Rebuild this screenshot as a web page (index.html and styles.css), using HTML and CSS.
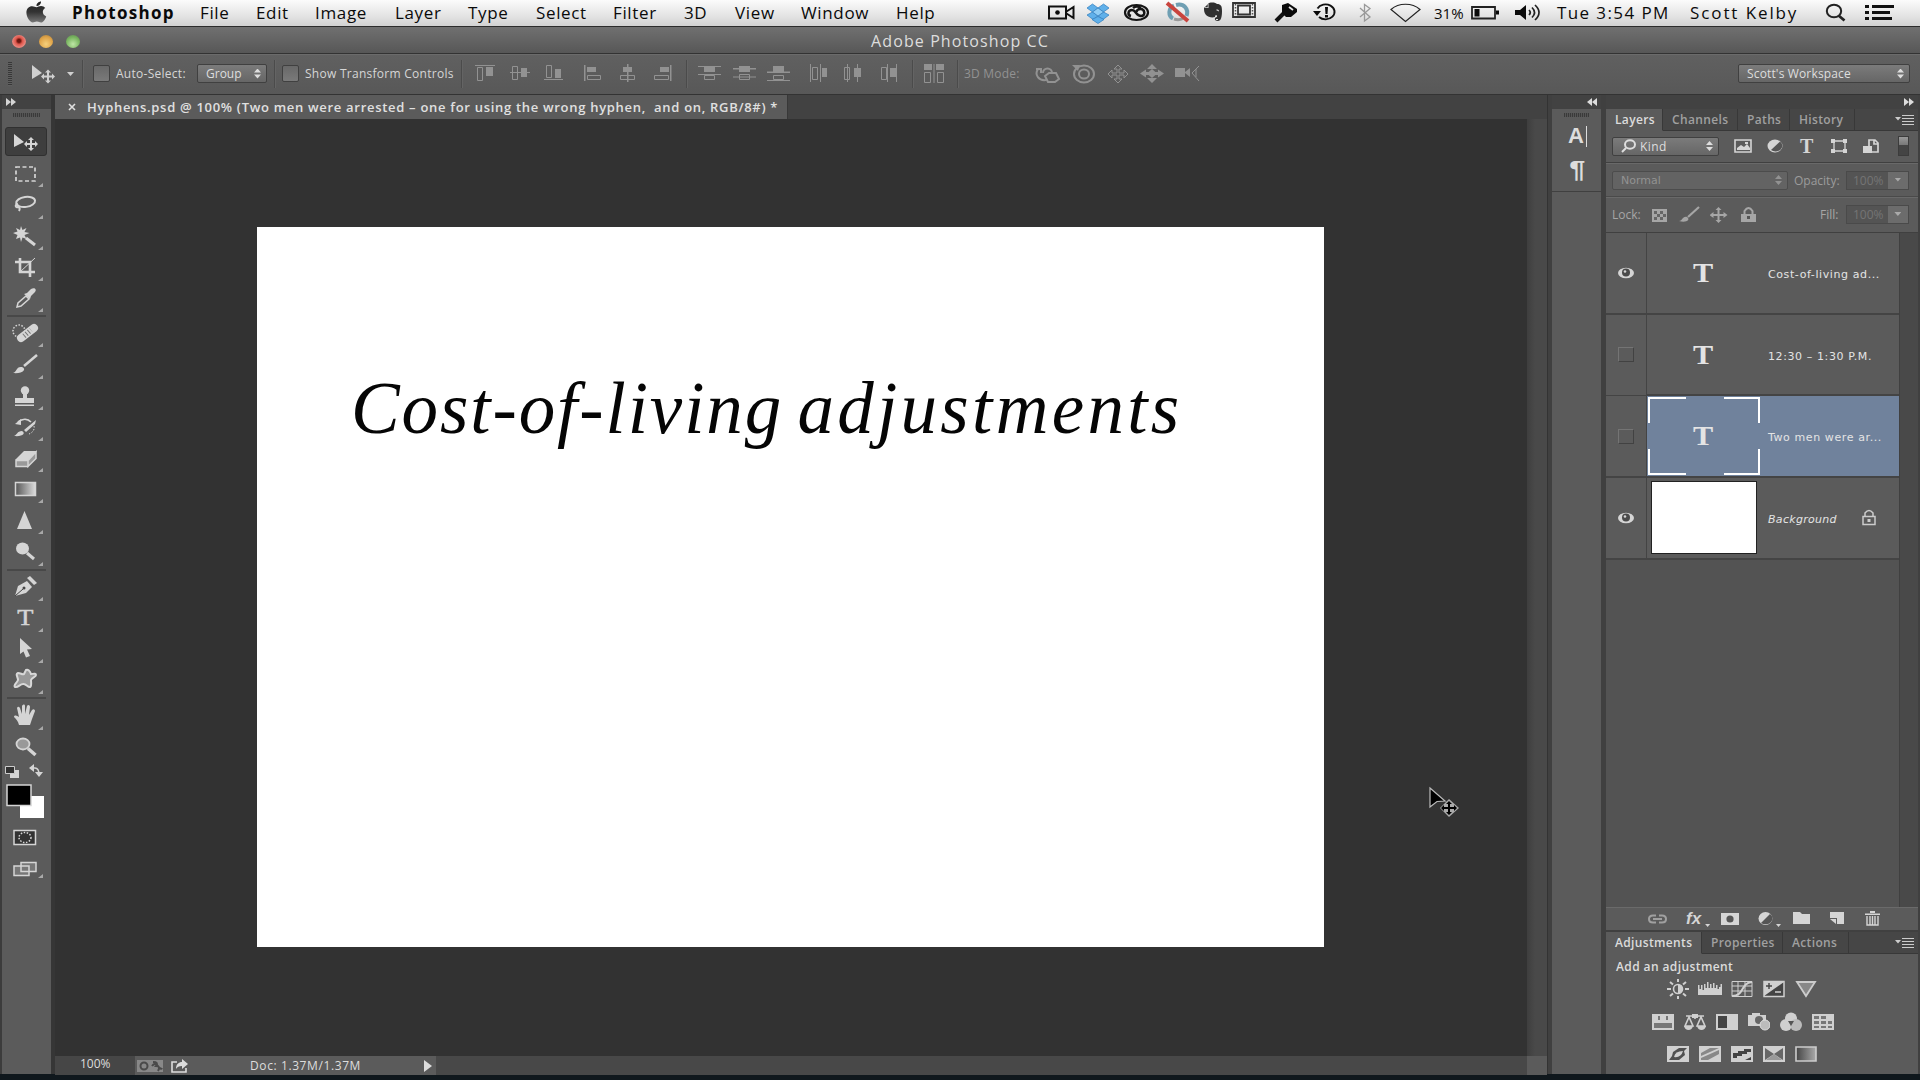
FILE: index.html
```html
<!DOCTYPE html>
<html lang="en">
<head>
  <meta charset="UTF-8" />
  <meta name="viewport" content="width=device-width, initial-scale=1.0" />
  <title>Adobe Photoshop CC</title>
  <link rel="stylesheet" href="styles.css">
</head>
<body>
  <header class="menubar">
    <svg class="apple" width="22" height="26" viewBox="0 0 22 26"><defs><linearGradient id="ap" x1="0" y1="0" x2="0" y2="1"><stop offset="0" stop-color="#222"/><stop offset=".5" stop-color="#333"/><stop offset="1" stop-color="#777"/></linearGradient></defs><path fill="url(#ap)" d="M10.500 7.200c1.200 0 2.600-1.100 4.600-1.100 1.700 0 3.200.7 4.200 2-3.600 2-3.200 6.800.9 8.300-.8 2.400-2.800 6.100-5.200 6.100-1.600 0-2.200-.9-4.100-.9s-2.700.9-4.100.9C4 22.500.4 17.500.4 12.600.4 8.600 3 6.200 6.100 6.200c1.800 0 3.300 1 4.400 1zM10.500 6C10.300 3.600 12.500 1.600 15 1.500 15.200 3.900 13 6 10.500 6z"/></svg>
    <nav class="menus">
      <b class="app">Photoshop</b><span>File</span><span>Edit</span><span>Image</span><span>Layer</span><span>Type</span><span>Select</span><span>Filter</span><span>3D</span><span>View</span><span>Window</span><span>Help</span>
    </nav>
    <div class="status">
      <svg width="28" height="26"><path fill="none" stroke="#111" stroke-width="2" d="M1 6.500h17v12H1zM18.500 11.500l7-4.500v11l-7-4.500"/><circle cx="9.500" cy="12.500" r="2.300"/></svg>
      <svg width="24" height="26"><g fill="#5fb0ea" stroke="#2f7dbd" stroke-width=".7"><path d="M6.500 4l5.500 4-5.500 4L1 8zM17.500 4L23 8l-5.500 4L12 8zM6.500 12l5.500 4-5 3.500L1 15zM17.500 12l5.500 3-6 4.500-5-3.500z"/><path fill="#8fcdf5" d="M12 8l5.500 4-5.500 4-5.500-4z"/><path d="M6 19.500l6-3 6 3-6 4z"/></g></svg>
      <svg width="28" height="26"><ellipse cx="13.500" cy="12.500" rx="11.500" ry="7.500" fill="none" stroke="#151515" stroke-width="2.200"/><path fill="none" stroke="#151515" stroke-width="2.500" d="M8 16c-4-1-3-6 1-6 4 0 4 6 9 6 5 0 4-7-.5-7-3 0-4 2-4 3M10 8c2-2 6-2 8 0"/></svg>
      <svg width="27" height="26"><path fill="none" stroke="#6f9fb3" stroke-width="4" d="M9 5.500C3 8 3 16 8 18.500M11 5c8-2 13 4 10.500 11"/><path fill="none" stroke="#9a9a9a" stroke-width="3" d="M9 19q5 1.500 9-.5"/><path stroke="#c9443e" stroke-width="4" d="M2 3l21 18"/></svg>
      <svg width="20" height="26"><path fill="#303030" d="M1 8l5-5c4-1 7 0 8 1 4 0 5 2 5 7 0 6-1 10-4 10-4 0-4-4-1-4 0-3-2-2-2 0-3 1-7 0-9-2C1 13 1 10 1 8z"/><path fill="#ddd" d="M13 10c2-1 3 0 3 1.500M13 19h2v1h-2zM5.500 4v4H2v-.8h2.700V4z"/></svg>
      <svg width="26" height="26"><path fill="none" stroke="#333" stroke-width="1.800" d="M1 3h22v14H1zM6 5.500h12v9H6z"/><path stroke="#555" stroke-dasharray="1.500 1.500" stroke-width="1.500" d="M3.500 4v12M20.500 4v12"/></svg>
      <svg width="26" height="26"><path stroke="#111" stroke-width="4" d="M2 21L13 10"/><path d="M8 5l6-2 9 6v3l-6 5h-5l-4-4z"/><path stroke="#e5e5e5" stroke-width="1.800" d="M15 7l4 3"/></svg>
      <svg width="26" height="26"><path fill="none" stroke="#111" stroke-width="1.900" d="M4.500 8.500A9 7.500 0 1 1 6 17"/><path d="M0 11h8l-4 5zM12 7h3l-.5 7h-2zM12 15h3v2.500h-3z"/></svg>
      <svg width="14" height="26"><path fill="none" stroke="#999" stroke-width="1.300" d="M1 8l10 9-5.500 4V4.500L11 8.500 1 17"/></svg>
      <svg width="32" height="26"><path fill="none" stroke="#222" stroke-width="1.200" d="M1 9.500C9 2.500 22 2.500 30 9.500L15.500 21.500z"/></svg>
      <span class="pct">31%</span>
      <svg width="30" height="26"><path fill="none" stroke="#222" stroke-width="1.800" d="M1 7h23v11.500H1z"/><path d="M3.500 9h5v7.500h-5zM25 10.500h3v4h-3z"/></svg>
      <svg width="28" height="26"><path d="M0 10h5l6-5v15l-6-5H0z"/><path fill="none" stroke="#222" stroke-width="1.700" d="M14 10q2.500 2.500 0 5M17 7.500q5 5 0 10M20 5q8 7.500 0 15"/></svg>
      <span class="clock">Tue 3:54 PM</span>
      <span class="user">Scott Kelby</span>
      <svg width="24" height="26"><ellipse cx="9" cy="11" rx="7.200" ry="6.200" fill="none" stroke="#222" stroke-width="2"/><path stroke="#222" stroke-width="2.800" d="M13.500 15.500l6 5"/></svg>
      <svg width="31" height="26"><path stroke="#111" stroke-width="2.800" d="M0 6.500h4M7 6.500h22M0 12.500h4M7 12.500h18M0 18.500h4M7 18.500h20"/></svg>
    </div>
  </header>

  <div class="titlebar">
    <div class="lights"><i class="light red"></i><i class="light yellow"></i><i class="light green"></i></div>
    <span class="title">Adobe Photoshop CC</span>
  </div>

  <div class="options">
    <i class="grip"></i>
    <svg class="on" width="27" height="40"><path d="M1 11l10 8-10 6z"/><path d="M17 15.500l3 3h-2v3h3v-2l3 3-3 3v-2h-3v3h2l-3 3-3-3h2v-3h-3v2l-3-3 3-3v2h3v-3h-2z"/></svg>
    <svg class="on" width="10" height="40"><path d="M0 18h7l-3.500 4z"/></svg>
    <i class="sep"></i>
    <i class="check"></i>
    <span class="lbl">Auto-Select:</span>
    <div class="select"><span class="l2">Group</span><i class="updown"></i></div>
    <i class="sep"></i>
    <i class="check"></i>
    <span class="lbl">Show Transform Controls</span>
    <i class="sep"></i>
    <svg width="20" height="40"><path d="M0 11h20v1H0zM11 13h7v9h-7z"/><path class="ln" d="M2.500 13.500h5v13h-5z"/></svg>
    <svg width="20" height="40"><path d="M0 18h20v1H0zM11 14h6v9h-6z"/><path class="ln" d="M2.500 12.500h5v13h-5z"/></svg>
    <svg width="20" height="40"><path d="M0 25h19v1H0zM11 15h6v9h-6z"/><path class="ln" d="M2.500 11.500h5v12h-5z"/></svg>
    <svg width="20" height="40"><path d="M0 11h1.500v16H0zM3 13h9v5H3z"/><path class="ln" d="M3.500 21.500h13v4h-13z"/></svg>
    <svg width="20" height="40"><path d="M8 10h1.500v18H8zM4 13h9v5H4z"/><path class="ln" d="M1.500 21.500h14v4h-14z"/></svg>
    <svg width="20" height="40"><path d="M17 11h1.500v16H17zM7 13h9v5H7z"/><path class="ln" d="M1.500 21.500h14v4h-14z"/></svg>
    <i class="sep"></i>
    <svg width="24" height="40"><path d="M0 12h23v1H0zM6 13h11v5H6zM0 20h23v1H0z"/><path class="ln" d="M6.500 21.500h10v4h-10z"/></svg>
    <svg width="24" height="40"><path d="M0 14h23v1.500H0zM6 12h11v6H6zM0 22.500h23v1H0z"/><path class="ln" d="M6.500 20.500h10v5h-10z"/></svg>
    <svg width="24" height="40"><path d="M0 17.500h23v1.500H0zM6 12h11v6H6zM0 26h23v1H0z"/><path class="ln" d="M6.500 21.500h10v4h-10z"/></svg>
    <svg width="20" height="40"><path d="M0 10h1v18H0zM10 10h1v18h-1zM12 14h5v9h-5z"/><path class="ln" d="M2.500 13.500h5v12h-5z"/></svg>
    <svg width="20" height="40"><path d="M3 10h1v18H3zM13 10h1v18h-1zM10 14h7v9h-7z"/><path class="ln" d="M.5 13.500h5v12h-5z"/></svg>
    <svg width="20" height="40"><path d="M7 10h1v18H7zM16 10h1v18h-1zM10 14h6v9h-6z"/><path class="ln" d="M1.500 13.500h5v12h-5z"/></svg>
    <i class="sep"></i>
    <svg width="24" height="40"><path d="M1 10h8v6H1zM13 10h8v6h-8zM10.500 10h1v19h-1z"/><path class="ln" d="M1.500 18.500h6v10h-6zM14.500 18.500h6v10h-6z"/></svg>
    <i class="sep"></i>
    <span class="mode3d">3D Mode:</span>
    <svg width="26" height="40"><path class="ln2" d="M8 19a4.500 4.500 0 1 1 9 0M3 15c-4 6 1 12 8 11M1 15h5v4M10 22l4-3h7l3 6-4 3h-7z"/></svg>
    <svg width="24" height="40"><ellipse class="ln2" cx="12" cy="20" rx="10" ry="8.500"/><ellipse class="ln2" cx="12" cy="20" rx="5" ry="4.500"/><path d="M0 11h8l-2 6z"/></svg>
    <svg width="24" height="40"><path class="ln" d="M11 11l4 4h-3v4h5v-3l4 4-4 4v-3h-5v4h3l-4 4-4-4h3v-4H5v3l-4-4 4-4v3h5v-4H7z"/></svg>
    <svg width="26" height="40"><path d="M12 10l5 5H7zM12 29l5-5H7zM0 19.500l6-4v8zM24 19.500l-6-4v8zM12 15l5 4.500-5 4.500-5-4.500z"/><path stroke="#929292" stroke-width="3" d="M4 19.500h5M15 19.500h5"/></svg>
    <svg width="26" height="40"><path d="M0 14h10v9H0zM10 18l5-4v9l-5-4z"/><path class="ln" d="M24 12l-7 7 7 8M21 15v8"/></svg>
    <div class="select ws"><span class="l4">Scott's Workspace</span><i class="updown"></i></div>
  </div>

  <div class="workspace">
    <aside class="toolbar">
      <div class="tbhead"><svg width="10" height="8"><path d="M0 0l5 4-5 4zM5 0l5 4-5 4z"/></svg></div>
      <div class="tbgrip"></div>
      <div class="tools">
        <div class="tool active"><svg><path d="M14 8l10 8-10 5z"/><path d="M31 11l3 3h-2v3h3v-2l3 3-3 3v-2h-3v3h2l-3 3-3-3h2v-3h-3v2l-3-3 3-3v2h3v-3h-2z"/></svg></div>
        <div class="tool"><svg><path class="st" stroke-width="1.700" stroke-dasharray="4 2.500" d="M16 9h19v14H16z"/></svg></div>
        <div class="tool"><svg><ellipse class="st" stroke-width="2" cx="25.500" cy="13" rx="9.500" ry="5" transform="rotate(-8 25 12)"/><path class="st" stroke-width="2" d="M18 15c-4 1-2 4 0 3 2 0 2 2 1 4"/></svg></div>
        <div class="tool"><svg><path d="M21 5l1.500 4 4-2-2 4 5 1-5 2 2 4-4-1.500L21 21l-1-4.500L16 18l1.500-4L13 12l4.500-1.500L16 7l4 2z"/><path class="st" stroke-width="3" d="M26 17l9 7"/></svg></div>
        <div class="tool"><svg><path class="st" stroke-width="2.600" d="M20 6v14h15M15 10h15v15"/><path class="st" d="M20 20L35 6"/></svg></div>
        <div class="tool"><svg><path class="st" stroke-width="1.500" d="M17 24l1-4 8-7 3 3-8 7z"/><path d="M24 11l3-1 4-4c4-2 6 1 4 3l-4 4-1 3z"/></svg></div>
        <hr>
        <div class="tool"><svg><circle class="st" cx="19" cy="13" r="6" stroke-width="1.500" stroke-dasharray="1.500 1.500"/><path class="st" stroke-width="8" stroke-linecap="round" d="M21 20L34 10"/><path stroke="#777" stroke-dasharray="1 2" stroke-width="5" d="M24 18l7-6"/></svg></div>
        <div class="tool"><svg><path d="M13 24c4-1 3-7 9-6 5 2 1 7-9 6z"/><path class="st" stroke-width="2.500" d="M24 17L37 6"/></svg></div>
        <div class="tool"><svg><circle cx="25" cy="9.500" r="4.200"/><path d="M23 12h4v5h7v5H15v-5h8zM15 23.500h19V25H15z"/></svg></div>
        <div class="tool"><svg><path d="M14 24c3-1 3-5 8-5 4 2 1 6-8 5zM24 18L36 8l-1 4-9 8z"/><path class="st" stroke-width="1.700" d="M18 10c5-4 10-3 13 0"/><path class="st" stroke-dasharray="1.500 1.500" d="M34 14c1 4-2 7-5 8"/><path d="M15 12l6-5v6z"/></svg></div>
        <div class="tool"><svg><path d="M15 17L24 8h13l-8 9z"/><path fill="#999" stroke="#d5d5d5" stroke-width="1.500" d="M16 17.500h12v6H16zM28 23.500l8-8V9l-8 8.500z"/></svg></div>
        <div class="tool"><svg><defs><linearGradient id="gr"><stop stop-color="#555"/><stop offset="1" stop-color="#ddd"/></linearGradient></defs><path fill="url(#gr)" stroke="#d5d5d5" stroke-width="1.500" d="M15.500 8.500h20v13h-20z"/></svg></div>
        <div class="tool"><svg><path d="M24.500 6L32 24H17z"/></svg></div>
        <div class="tool"><svg><ellipse cx="22.500" cy="12.500" rx="6.500" ry="6"/><path class="st" stroke-width="3" d="M27 17l7 6"/></svg></div>
        <hr>
        <div class="tool"><svg><path d="M15 24l3-10 9-5 5 6-6 6z"/><path d="M27 6l3-2 7 7-3 2z"/><path stroke="#444" d="M15 24l8-7"/><circle cx="24" cy="16" r="1.500" fill="#444"/></svg></div>
        <div class="tool"><b class="tee">T</b></div>
        <div class="tool"><svg><path d="M20 4l12 11-5 .5 3 6.500-4 1.500-2.500-6L20 20z"/></svg></div>
        <div class="tool"><svg><path fill="#999" stroke="#d8d8d8" stroke-width="2" d="M18 8c3 0 4 2 6 1l2-4c2-1 4 1 5 4 2 0 5-1 5 1s-4 2-5 5c0 3 1 6-1 7s-4-4-7-3c-3 0-5 4-8 3-2-2 2-4 3-7 0-3-3-6 0-7z"/></svg></div>
        <hr>
        <div class="tool"><svg><path d="M19 25c-1-4-3-6-5-8 0-2 2-2 5 0L17 8c1-2 2-1 3 0l2 6V6c1-2 3-2 3 0v8l2-8c1-2 3-1 3 1l-1 8 3-5c2-2 3 0 3 1l-3 8-2 6z"/></svg></div>
        <div class="tool last"><svg><ellipse fill="#999" stroke="#d5d5d5" stroke-width="1.800" cx="23" cy="12" rx="6.500" ry="5.500"/><path class="st" stroke-width="3.500" d="M28 16.500l7.500 6.500"/></svg></div>
      </div>
      <svg class="colors" width="52" height="60"><path fill="#d5d5d5" d="M10 7h9v8h-9z"/><path fill="#333" stroke="#ccc" d="M5.500 3.500h9v7h-9z"/><path class="st" stroke-width="1.500" d="M31 5h4q4 0 4 7"/><path d="M29 5l5-4v8zM35 9h8l-4 5z"/><path fill="#fff" d="M20 33h24v22H20z"/><path fill="#000" stroke="#d5d5d5" stroke-width="1.500" d="M7 22h24v20.500H7z"/></svg>
      <svg class="modes" width="52" height="60"><path fill="#333" stroke="#d5d5d5" stroke-width="1.500" d="M14 7.500h21.500v14H14z"/><ellipse class="st" stroke-width="1.500" stroke-dasharray="1.500 1.500" cx="25" cy="14.500" rx="6" ry="5"/><path fill="#777" stroke="#d5d5d5" stroke-width="1.500" d="M14 43h15v9.500H14zM21 39.500h15v9H21z"/><path fill="#aaa" d="M43 51v4h-5z"/></svg>
    </aside>

    <main class="doc">
      <div class="tabs">
        <div class="tab"><svg width="8" height="8"><path class="st" stroke-width="1.600" d="M1 1l6 6M7 1L1 7"/></svg><span>Hyphens.psd @ 100% (Two men were arrested – one for using the wrong hyphen, &nbsp;and on, RGB/8#) *</span></div>
      </div>
      <div class="view">
        <div class="pasteboard"><div class="artboard"><p><span class="w1">Cost-of-living</span> <span class="w2">adjustments</span></p></div></div>
        <div class="vscroll"></div>
      </div>
      <footer class="docbar">
        <span class="zoom">100%</span>
        <div class="docinfo">
          <svg width="58" height="18"><path fill="#888" d="M2 3h26v12H2z"/><circle class="dk" cx="9" cy="9" r="3.500"/><path class="dk" d="M18 5q6 0 3 4 5 0 2 5M17 9q3-4 6 0t4 2"/><path class="st" stroke-width="1.600" d="M42 5h-5v10h14v-4"/><path d="M41 12c0-5 3-7 6-7V2l6 5-6 5V9c-3 0-5 1-6 3z"/></svg>
          <span>Doc: 1.37M/1.37M</span>
          <svg class="play" width="8" height="12"><path d="M0 0l8 6-8 6z"/></svg>
        </div>
        <div class="hscroll"></div>
        <div class="corner"></div>
      </footer>
      <svg class="cursor" width="34" height="34"><path fill="#000" stroke="#bbb" stroke-width="1.200" d="M2 2l15 13-8 .5L2 21z"/><path fill="#aaa" d="M21 13l10 9-10 9-9-9z"/><path fill="#000" d="M21 15l3 3h-2v3h4v-2l3 3-3 3v-2h-4v3h2l-3 3-3-3h2v-3h-4v2l-3-3 3-3v2h4v-3h-2z"/></svg>
    </main>

    <aside class="dock">
      <div class="dockhead"><svg width="10" height="8"><path d="M5 0L0 4l5 4zM10 0L5 4l5 4z"/></svg></div>
      <div class="dockbox">
        <i class="dots"></i>
        <span class="char">A</span>
        <span class="para">¶</span>
      </div>
    </aside>

    <aside class="panels">
      <div class="panelhead"><svg width="10" height="8"><path d="M0 0l5 4-5 4zM5 0l5 4-5 4z"/></svg></div>
      <div class="ptabs t1"><span class="cur">Layers</span><span>Channels</span><span>Paths</span><span>History</span><i><svg width="20" height="12"><path d="M0 3h6L3 6.500zM7 1h12v1H7zM7 4h12v1H7zM7 7h12v1H7zM7 10h12v1H7z"/></svg></i></div>
      <div class="filter">
        <div class="select kind"><svg width="16" height="14"><ellipse class="st" stroke-width="2" cx="9" cy="5.500" rx="5" ry="4.200"/><path class="st" stroke-width="2" d="M5 9l-4 4"/></svg><span>Kind</span><i class="updown"></i></div>
        <svg width="20" height="20"><path class="st" stroke-width="1.600" d="M1 4h16v12H1z"/><path d="M3 14v-2l4-3 3 2 3-3 3 4v2zM11 6h3v2h-3z"/></svg>
        <svg width="18" height="20"><ellipse cx="8" cy="10" rx="7.500" ry="6.500"/><path fill="#555" d="M13 5.500a6 5 0 0 1-9 8.500z"/></svg>
        <b class="ft">T</b>
        <svg width="18" height="20"><path class="st" stroke-width="1.300" d="M3 5h11v10H3z"/><path d="M0 3h4v4H0zM12 3h4v4h-4zM0 13h4v4H0zM12 13h4v4h-4z"/></svg>
        <svg width="18" height="20"><path class="st" stroke-width="1.700" d="M6 10V4h6l3 3v9H9M11 4v4h4"/><path d="M0 10h9v7H0z"/></svg>
        <i class="switch"></i>
      </div>
      <div class="blend">
        <div class="select dis"><span>Normal</span><i class="updown"></i></div>
        <span class="op">Opacity:</span>
        <div class="field"><span>100%</span><i></i></div>
      </div>
      <div class="lock">
        <span class="lk">Lock:</span>
        <svg width="16" height="20"><path d="M0 4h15v13H0z"/><path fill="#666" d="M2 6h3v3H2zM8 6h3v3H8zM5 9h3v3H5zM11 9h3v3h-3zM2 12h3v3H2zM8 12h3v3H8z"/></svg>
        <svg width="22" height="20"><path d="M0 16c4 0 3-5 8-4 4 3-1 6-8 4z"/><path stroke="#a6a6a6" stroke-width="2.200" d="M9 12l11-10"/></svg>
        <svg width="18" height="20"><path d="M8.500 2l3 3h-2v4h4V7l4 3-4 3v-2h-4v4h2l-3 3-3-3h2v-4h-4v2l-4-3 4-3v2h4V5h-2z"/></svg>
        <svg width="16" height="20"><path d="M0 9h15v8H0z"/><path fill="none" stroke="#a6a6a6" stroke-width="2" d="M3.500 9V6q4-6 8 0v3"/><path fill="#555" d="M6 11h3v3H6z"/></svg>
        <span class="fl">Fill:</span>
        <div class="field"><span>100%</span><i></i></div>
      </div>
      <div class="layers">
        <div class="rows">
          <div class="layer"><div class="vis"><svg class="eye" width="18" height="14"><ellipse cx="9" cy="7" rx="8" ry="5.200"/><circle fill="#4a4a4a" cx="9" cy="6.500" r="4"/><circle cx="8" cy="5.500" r="1.300"/></svg></div><div class="thumb"><b>T</b></div><span>Cost-of-living ad...</span></div>
          <div class="layer"><div class="vis"><i class="off"></i></div><div class="thumb"><b>T</b></div><span>12:30 – 1:30 P.M.</span></div>
          <div class="layer sel"><div class="vis"><i class="off"></i></div><div class="thumb"><svg class="corners" width="112" height="78"><path fill="none" stroke="#fff" stroke-width="2" d="M1 26V1h37M76 1h35v25M111 52v25H76M38 77H1V52"/></svg><b>T</b></div><span>Two men were ar...</span></div>
          <div class="layer"><div class="vis"><svg class="eye" width="18" height="14"><ellipse cx="9" cy="7" rx="8" ry="5.200"/><circle fill="#4a4a4a" cx="9" cy="6.500" r="4"/><circle cx="8" cy="5.500" r="1.300"/></svg></div><div class="thumb"><i class="white"></i></div><span class="bg"><em>Background</em></span><svg class="padlock" width="15" height="18"><path class="st" stroke-width="1.500" d="M1 7.500h12v8H1zM3 7V4q4-5 8 0v3"/><path d="M5.500 10h3v3h-3z"/></svg></div>
        </div>
        <div class="lscroll"></div>
      </div>
      <div class="lactions">
        <svg width="20" height="20"><path fill="none" stroke="#a0a0a0" stroke-width="2" d="M8 6.500H5q-4 0-4 3.500t4 3.500h3M11 6.500h3q4 0 4 3.500t-4 3.500h-3M5 10h9"/></svg>
        <span class="fx"><em>fx</em><i></i></span>
        <svg width="20" height="20"><path d="M0 4h18v12H0z"/><circle cx="9" cy="10" r="3.600" fill="#555"/></svg>
        <svg width="24" height="20"><ellipse cx="7.500" cy="9.500" rx="7" ry="6.500"/><path fill="#555" d="M12 5a6 5 0 0 1-9 9z"/><path d="M18 15h5l-2.500 3z"/></svg>
        <svg width="20" height="20"><path d="M0 3h7l2 2h8v10H0z"/></svg>
        <svg width="18" height="20"><path d="M0 3h14v12H7V9H0z"/><path d="M0 10h6v5z"/></svg>
        <svg width="18" height="20"><path d="M0 4.500h15V6H0zM5 2h5v2H5z"/><path class="st" stroke-width="1.400" d="M2 7v9h11V7M5 7v9M7.500 7v9M10 7v9"/></svg>
      </div>
      <div class="ptabs t2"><span class="cur">Adjustments</span><span>Properties</span><span>Actions</span><i><svg width="20" height="12"><path d="M0 3h6L3 6.500zM7 1h12v1H7zM7 4h12v1H7zM7 7h12v1H7zM7 10h12v1H7z"/></svg></i></div>
      <div class="adjust">
        <p>Add an adjustment</p>
        <div class="arow a5">
          <svg viewBox="0 0 22 20"><circle class="st" stroke-width="1.600" cx="11" cy="10" r="4.500"/><path d="M11 5.500a4.500 4.500 0 0 1 0 9z"/><path class="st" stroke-width="2" d="M11 0v3M11 17v3M0 10h4M18 10h4M3 3l3 2.500M19 3l-3 2.500M3 17l3-2.500M19 17l-3-2.500"/></svg>
          <svg class="wide" viewBox="0 0 24 20"><path d="M0 16V6h1.500v4H3V6h1.500v5H6V5h1.500v4H9V3h1.500v6H12V5h1.500v4H15V4h1.500v5H18V6h1.500v4H21V8h1.500V5H24v11z"/></svg>
          <svg viewBox="0 0 22 20"><path class="st" d="M1 2.500h20v15H1zM1 7h20M1 12h20M7 2.500v15M14 2.500v15"/><path class="st" stroke-width="2" d="M1 17c13 0 8-13 20-14"/></svg>
          <svg viewBox="0 0 22 20"><path fill="#444" stroke="#d0d0d0" stroke-width="1.500" d="M1 2.500h20v15H1z"/><path d="M1 17V3h20z"/><path stroke="#444" stroke-width="1.400" d="M3 7h6M6 4v6"/><path class="st" stroke-width="1.500" d="M12 13h6"/></svg>
          <svg viewBox="0 0 22 20"><path fill="#888" stroke="#ccc" stroke-width="1.800" d="M2 3h18l-9 14z"/></svg>
        </div>
        <div class="arow a6">
          <svg viewBox="0 0 22 20"><path d="M0 2h22v16H0z"/><path fill="#777" d="M2 11h18v5H2zM6 4h2v4H6zM14 4h2v4h-2z"/></svg>
          <svg viewBox="0 0 22 20"><path class="st" stroke-width="1.600" d="M2 4h18M5 5l-4 9h8zM17 5l-4 9h8zM11 4v3"/><path d="M0 14h9q-1 4-4.500 4T0 14zM13 14h9q-1 4-4.500 4T13 14zM8 2h6v4H8z"/></svg>
          <svg viewBox="0 0 22 20"><path d="M0 2h22v16H0z"/><path fill="#444" d="M2 4h9v12H2z"/></svg>
          <svg viewBox="0 0 22 20"><path d="M0 3h4V1h8v2h6v11H0z"/><circle cx="11" cy="8" r="4" fill="#666"/><circle cx="17" cy="13" r="5" fill="#bbb" stroke="#ddd"/></svg>
          <svg viewBox="0 0 22 20"><circle cx="11" cy="6.500" r="6"/><circle cx="6" cy="13" r="6"/><circle cx="16" cy="13" r="6" fill="#bbb"/><path fill="#555" d="M8 9h6l-3 5z"/></svg>
          <svg viewBox="0 0 22 20"><path d="M0 2h22v16H0z"/><path fill="#777" d="M2 4h5v3H2zM9 4h5v3H9zM2 9h5v3H2zM9 9h5v3H9zM16 9h4v3h-4zM2 14h5v2H2zM9 14h5v2H9zM16 14h4v2h-4z"/></svg>
        </div>
        <div class="arow a5">
          <svg viewBox="0 0 22 20"><path d="M0 2h22v16H0z"/><path fill="#505050" d="M2 4h18l-3 3 1 4-6 5H2l3-4 1-4 6-4z"/><path d="M7 13q7 1 9-6-8 0-9 6z"/></svg>
          <svg viewBox="0 0 22 20"><path d="M0 2h22v16H0z"/><path fill="#888" d="M2 9l9-5h9L2 12zM2 16v-2l18-8v4L9 16z"/></svg>
          <svg viewBox="0 0 22 20"><path d="M0 2h22v16H0z"/><path fill="#444" d="M2 9h5V7h6V5h7v3h-4v2h-5v2H6v2H2zM14 16l6-3v3z"/></svg>
          <svg viewBox="0 0 22 20"><path d="M0 2h22v16H0z"/><path fill="#666" d="M2 4l9 6-9 6zM20 4l-9 6 9 6z"/><path fill="#999" d="M3 16l8-6 8 6z"/></svg>
          <svg viewBox="0 0 22 20"><defs><linearGradient id="gm"><stop stop-color="#444"/><stop offset="1" stop-color="#aaa"/></linearGradient></defs><path fill="url(#gm)" stroke="#ccc" stroke-width="1.600" d="M1 3h20v14H1z"/></svg>
        </div>
      </div>
    </aside>
  </div>
</body>
</html>
```
FILE: styles.css
```css
* {
  box-sizing: border-box;
}
body {
  margin: 0;
  width: 1920px;
  height: 1080px;
  overflow: hidden;
  background: #10181d;
  font-family: "Open Sans", "Noto Sans", sans-serif;
  font-size: 13px;
  color: #ddd;
}
svg {
  display: block;
  fill: currentColor;
}
i {
  display: block;
}
.st {
  fill: none;
  stroke: currentColor;
}

/* menu bar */
.menubar {
  display: flex;
  height: 26px;
  padding-left: 26px;
  background: linear-gradient(#fbfbfb, #e4e4e4 60%, #d2d2d2);
  color: #0a0a0a;
  font-size: 17px;
  line-height: 26px;
  white-space: nowrap;
}
.apple {
  margin-right: 24px;
}
.menus {
  display: grid;
  grid-template-columns: 128px 56px 59px 80px 73px 68px 77px 71px 51px 66px 95px 152px;
  letter-spacing: 0.65px;
}
.app {
  letter-spacing: 1.3px;
}
.status {
  display: grid;
  grid-template-columns: 38px 37px 42px 38px 29px 42px 39px 46px 31px 44px 37px 44px 42px 133px 135px 40px 55px;
}
.pct {
  font-size: 15px;
}
.clock {
  letter-spacing: 1.4px;
}
.user {
  letter-spacing: 1.9px;
}

/* window title */
.titlebar {
  display: grid;
  grid-template-columns: 1fr auto 1fr;
  height: 28px;
  padding: 0 12px;
  border-top: 1px solid #2c2c2c;
  border-bottom: 1px solid #333;
  background: linear-gradient(#707070, #575757);
  line-height: 28px;
  font-size: 16px;
}
.title {
  letter-spacing: 1.1px;
}
.lights {
  display: flex;
  align-items: center;
  gap: 13px;
}
.light {
  width: 14px;
  height: 13px;
  border-radius: 50%;
}
.red {
  background: radial-gradient(circle at 50% 45%, #6b1710 15%, #e0574c 35%, #e8867e 65%, #9c443d);
}
.yellow {
  background: radial-gradient(circle at 50% 70%, #f6d07c, #dfa348 60%, #9a7640);
}
.green {
  background: radial-gradient(circle at 50% 70%, #bfe6a6, #78b45f 60%, #5c8050);
}

/* options bar */
.options {
  display: grid;
  grid-template-columns: 23px 36px 15px 11px 23px 81px 77px 8px 23px 156px 14px 35px 34px 40px 35px 34px 33px 12px 35px 34px 43px 34px 36px 32px 11px 34px 7px 71px 37px 35px 33px 35px 563px 172px;
  grid-template-rows: 37px;
  align-items: center;
  height: 40px;
  padding-left: 8px;
  background: linear-gradient(#606060, #585858);
  border-top: 1px solid #6b6b6b;
  color: #929292;
  white-space: nowrap;
}
.options .on {
  color: #d0d0d0;
}
.options .ln {
  fill: none;
  stroke: #929292;
}
.options .ln2 {
  fill: none;
  stroke: #929292;
  stroke-width: 2;
}
.grip {
  width: 4px;
  height: 24px;
  background: repeating-linear-gradient(#383838 0 1px, #606060 1px 2px);
}
.sep {
  width: 2px;
  height: 28px;
  background: #4b4b4b;
  border-right: 1px solid #646464;
}
.check {
  width: 17px;
  height: 17px;
  border: 1px solid #404040;
  border-radius: 2px;
  background: linear-gradient(#686868, #7a7a7a);
}
.lbl {
  color: #d6d6d6;
  font-size: 12px;
  letter-spacing: 0.27px;
}
.select {
  display: flex;
  align-items: center;
  width: 70px;
  height: 19px;
  padding: 0 5px 0 8px;
  border: 1px solid #404040;
  border-radius: 2px;
  background: linear-gradient(#7b7b7b, #666);
  color: #dedede;
  font-size: 12px;
  line-height: 17px;
}
.ws {
  width: 172px;
}
.l4 {
  letter-spacing: 0.15px;
}
.updown {
  width: 7px;
  height: 10px;
  margin-left: auto;
  background: currentColor;
  clip-path: polygon(50% 0, 100% 40%, 0 40%, 0 60%, 100% 60%, 50% 100%, 0 60%, 0 40%);
}
.mode3d {
  font-size: 12px;
  letter-spacing: 0.2px;
}

/* left tools */
.workspace {
  display: flex;
  height: 980px;
  border-top: 1px solid #333;
}
.toolbar {
  width: 55px;
  border-left: 2px solid #3c3c3c;
  border-right: 4px solid #363636;
  background: #5b5b5b;
  color: #d5d5d5;
}
.tbhead {
  height: 14px;
  padding: 3px 4px;
  background: #424242;
}
.tbgrip {
  width: 27px;
  height: 4px;
  margin: 4px 11px 10px;
  background: repeating-linear-gradient(90deg, #3a3a3a 0 1px, #555 1px 2px);
}
.tools {
  height: 636px;
}
.tool {
  position: relative;
  height: 31.2px;
  margin: 0 -2px;
}
.tool svg {
  width: 52px;
  height: 31px;
}
.tool::after {
  content: "";
  position: absolute;
  right: 10px;
  bottom: 2px;
  border-left: 5px solid transparent;
  border-bottom: 4px solid #a8a8a8;
}
.tool.active::after, .tool.last::after {
  display: none;
}
.tool.active {
  width: 42px;
  margin-left: 3px;
  background: #3e3e3e;
  border: 1px solid #303030;
  border-radius: 3px;
  height: 29px;
  margin-bottom: 2.2px;
}
.tool.active svg {
  margin: -2px -6px;
  height: 28px;
}
.tools hr {
  height: 2px;
  margin: 1px 5px;
  border: 0;
  background: #484848;
}
.tee {
  display: block;
  padding-left: 17px;
  font: 23px/29px "Liberation Serif", serif;
  -webkit-text-stroke: 0.5px;
  transform: scaleX(1.15);
  transform-origin: 16px 0;
}
.colors, .modes {
  margin-left: -2px;
}

/* document */
.doc {
  position: relative;
  width: 1493px;
  border-right: 1px solid #333;
}
.tabs {
  height: 24px;
  background: #424242;
}
.tab {
  display: flex;
  align-items: center;
  gap: 11px;
  width: 733px;
  height: 24px;
  padding-left: 13px;
  background: #5b5b5b;
  border-right: 1px solid #383838;
  color: #e0e0e0;
  font-weight: 600;
  font-size: 13px;
  letter-spacing: 0.7px;
  white-space: nowrap;
}
.view {
  display: flex;
  height: 937px;
}
.pasteboard {
  width: 1472px;
  padding: 108px 0 0 202px;
  background: #323232;
}
.artboard {
  width: 1067px;
  height: 720px;
  background: #fff;
}
.artboard p {
  margin: 0;
  padding: 137px 0 0 94px;
  font: italic 73px/90px "Liberation Serif", serif;
  word-spacing: -4px;
  color: #050505;
  white-space: nowrap;
}
.w1 {
  letter-spacing: 1.9px;
}
.w2 {
  letter-spacing: 3.3px;
}
.vscroll {
  width: 20px;
  background: linear-gradient(90deg, #3e3e3e, #494949 40%);
}
.docbar {
  display: flex;
  height: 19px;
  background: #484848;
}
.zoom {
  width: 80px;
  padding-left: 25px;
  font-size: 12px;
  line-height: 16px;
  background: #464646;
}
.docinfo {
  display: flex;
  align-items: center;
  width: 301px;
  background: #5b5b5b;
  font-size: 12px;
}
.docinfo span {
  width: 174px;
  margin-left: 57px;
  letter-spacing: 0.6px;
}
.docinfo .play {
  width: 8px;
}
.dk {
  fill: none;
  stroke: #4a4a4a;
  stroke-width: 2;
}
.hscroll {
  flex: 1;
}
.corner {
  width: 20px;
  background: #5b5b5b;
}
.cursor {
  position: absolute;
  left: 1373px;
  top: 691px;
}

/* collapsed dock */
.dock {
  width: 57px;
  background: #5b5b5b;
  border: solid #404040;
  border-width: 0 4px;
}
.dockhead, .panelhead {
  display: flex;
  justify-content: flex-end;
  height: 14px;
  padding: 3px 4px;
  background: #424242;
}
.dockbox {
  display: flex;
  flex-direction: column;
  height: 83px;
  padding: 4px 16px 0;
  border-bottom: 1px solid #404040;
}
.dots {
  width: 25px;
  height: 4px;
  margin-left: -4px;
  background: repeating-linear-gradient(90deg, #3a3a3a 0 1px, #555 1px 2px);
}
.char {
  width: 19px;
  height: 21px;
  margin: 9px 0 9px;
  border-right: 1px solid #ddd;
  font: bold 22px/20px "Liberation Sans", sans-serif;
}
.para {
  padding-left: 1px;
  font: bold 24px/27px "Liberation Sans", sans-serif;
  transform: scaleX(1.2);
  transform-origin: 0 0;
}

/* panels */
.panels {
  width: 315px;
  background: #5b5b5b;
  border: 1px solid #404040;
  border-width: 0 2px 0 1px;
  white-space: nowrap;
}
.ptabs {
  display: grid;
  grid-template-columns: 57px 75px 52px 65px 1fr;
  height: 21px;
  font-size: 12px;
  font-weight: 600;
  letter-spacing: 0.35px;
  line-height: 21px;
  background: #464646;
  color: #a0a0a0;
}
.ptabs span {
  padding-left: 9px;
  border-right: 1px solid #383838;
  border-bottom: 1px solid #383838;
}
.ptabs .cur {
  background: #5b5b5b;
  color: #dcdcdc;
  border-bottom-color: #5b5b5b;
}
.ptabs i {
  padding: 5px 3px 0 0;
  border-bottom: 1px solid #383838;
  color: #ccc;
}
.ptabs i svg {
  margin-left: auto;
}
.filter {
  display: grid;
  grid-template-columns: 122px 33px 33px 31px 32px 35px 1fr;
  align-items: center;
  height: 33px;
  padding-left: 6px;
  border-bottom: 1px solid #404040;
  color: #d5d5d5;
}
.select.kind {
  width: 107px;
  gap: 3px;
}
.kind span {
  letter-spacing: 0.4px;
}
.ft {
  font: bold 20px/20px "Liberation Serif", serif;
}
.switch {
  width: 11px;
  height: 20px;
  border: 1px solid #3c3c3c;
  background: linear-gradient(#999, #777 45%, #444 45%);
}
.blend {
  display: flex;
  align-items: center;
  height: 34px;
  padding-left: 6px;
  border-top: 1px solid #696969;
  border-bottom: 1px solid #4a4a4a;
  color: #9c9c9c;
}
.select.dis {
  width: 176px;
  background: #636363;
  color: #929292;
  border-color: #4c4c4c;
  font: 11px/17px "DejaVu Sans", sans-serif;
}
.op {
  width: 52px;
  margin-left: 6px;
  font-size: 12px;
}
.field {
  display: flex;
  width: 63px;
  height: 19px;
  border: 1px solid #4a4a4a;
  background: #545454;
  color: #747474;
  font-size: 12px;
  line-height: 17px;
}
.field span {
  width: 42px;
  padding-left: 6px;
}
.field i {
  width: 20px;
  background: #6c6c6c;
}
.field i::before {
  content: "";
  display: block;
  width: 7px;
  height: 4px;
  margin: 6px 6px;
  background: #aaa;
  clip-path: polygon(0 0, 100% 0, 50% 100%);
}
.lock {
  display: grid;
  grid-template-columns: 40px 27px 31px 31px 79px 26px 63px;
  grid-template-rows: 33px;
  align-items: center;
  height: 35px;
  padding-left: 6px;
  border-top: 1px solid #696969;
  color: #a6a6a6;
  font-size: 12px;
}
.layers {
  display: flex;
  height: 675px;
  border-top: 1px solid #404040;
  background: #535353;
}
.rows {
  width: 293px;
}
.layer {
  display: flex;
  align-items: center;
  height: 81.7px;
  border-bottom: 2px solid #444;
  background: #5b5b5b;
  font: 11px/16px "DejaVu Sans", sans-serif;
  color: #e4e4e4;
}
.vis {
  display: flex;
  align-items: center;
  justify-content: center;
  width: 41px;
  height: 80px;
  border-right: 1px solid #444;
  background: #5b5b5b;
}
.eye {
  color: #d5d5d5;
}
.off {
  width: 16px;
  height: 15px;
  border: 1px solid #747474;
  border-right-color: #424242;
  border-bottom-color: #424242;
}
.thumb {
  position: relative;
  display: flex;
  align-items: center;
  justify-content: center;
  width: 113px;
  height: 80px;
}
.thumb b {
  font: bold 27px/30px "Liberation Serif", serif;
  transform: scaleX(1.12);
}
.corners {
  position: absolute;
  left: 1px;
  top: 1px;
}
.white {
  width: 106px;
  height: 73px;
  border: 1px solid #222;
  background: #fff;
}
.layer span {
  width: 125px;
  padding: 4px 0 0 8px;
  letter-spacing: 0.6px;
}
.layer .bg {
  width: 100px;
  letter-spacing: 0.3px;
}
.layer.sel {
  background: #70829c;
}
.padlock {
  margin-left: 2px;
  color: #ccc;
}
.lscroll {
  flex: 1;
  background: #494949;
  border-left: 1px solid #404040;
}
.lactions {
  display: grid;
  grid-template-columns: 38px 35px 37px 35px 37px 35px 1fr;
  align-items: center;
  height: 25px;
  padding-left: 42px;
  border-top: 1px solid #6a6a6a;
  border-bottom: 2px solid #404040;
  color: #d5d5d5;
}
.fx {
  display: flex;
  align-items: flex-end;
  font: bold 17px/20px "Liberation Sans", sans-serif;
}
.fx i {
  width: 5px;
  height: 3px;
  margin: 0 0 2px 4px;
  background: #d5d5d5;
  clip-path: polygon(0 0, 100% 0, 50% 100%);
}
.t2 {
  grid-template-columns: 96px 81px 66px 1fr;
  height: 22px;
}
.adjust p {
  margin: 0 0 0 10px;
  font-size: 12px;
  font-weight: 600;
  letter-spacing: 0.4px;
  line-height: 25px;
}
.arow {
  display: flex;
  gap: 10px;
  height: 32.5px;
  padding-left: 61px;
  color: #d0d0d0;
}
.a6 {
  padding-left: 46px;
}
.arow svg {
  width: 22px;
  height: 20px;
}
.arow .wide {
  width: 24px;
  margin: 0 -1px;
}
```
